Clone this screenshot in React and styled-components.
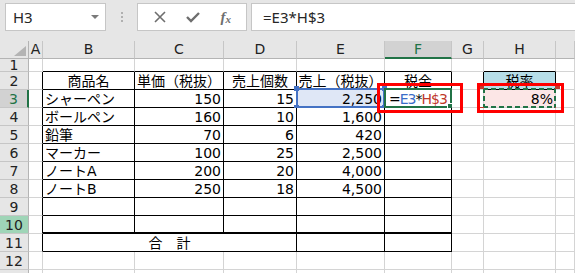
import styled, { createGlobalStyle } from "styled-components";

const GlobalStyle = createGlobalStyle`
  body {
    margin: 0;
    background: #fff;
    overflow: hidden;
  }
`;

const GREEN = "#217346";
const GRID = "1px solid #d4d4d4";
const BLACK = "1px solid #000";
const THICK = "2px solid #000";

const COLUMNS = ["A", "B", "C", "D", "E", "F", "G", "H", ""];

const products = [
  ["シャーペン", "150", "15", "2,250"],
  ["ボールペン", "160", "10", "1,600"],
  ["鉛筆", "70", "6", "420"],
  ["マーカー", "100", "25", "2,500"],
  ["ノートA", "200", "20", "4,000"],
  ["ノートB", "250", "18", "4,500"],
];

const headings = ["商品名", "単価（税抜）", "売上個数", "売上（税抜）", "税金"];

const App = () => {
  const rows = [];
  for (let r = 1; r <= 13; r++) {
    // row 13 is only a sliver at the bottom edge, its number is not visible
    rows.push(
      <RowHead key={"h" + r} $sel={r === 3} $hl={r === 10} $short={r === 1}>
        {r < 13 ? r : null}
      </RowHead>
    );
    for (let c = 0; c < 9; c++) {
      const inTable = r >= 2 && r <= 11;
      let right;
      let bottom;
      let bg;
      let align = "left";
      let content = null;

      if (inTable && c <= 5) right = BLACK;
      if (r >= 1 && r <= 11 && c >= 1 && c <= 5) bottom = r === 10 ? THICK : BLACK;
      if (r === 2 && (c === 6 || c === 7)) right = BLACK;
      if ((r === 1 || r === 2) && c === 7) bottom = BLACK;

      if (r === 11 && c === 1) {
        rows.push(
          <Cell key={r + "-" + c} $span={3} $r={BLACK} $b={BLACK} $align="center">
            合　計
          </Cell>
        );
        c = 3;
        continue;
      }

      if (r === 2 && c >= 1 && c <= 5) {
        align = "center";
        content = headings[c - 1];
      }
      if (r === 2 && c === 7) {
        align = "center";
        bg = "#b7dee8";
        content = "税率";
      }
      if (r >= 3 && r <= 8 && c >= 1 && c <= 4) {
        const p = products[r - 3];
        content = p[c - 1];
        align = c === 1 ? "left" : "right";
      }

      if (r === 3 && c === 4) {
        rows.push(
          <Cell key={r + "-" + c} $r={right} $b={bottom} $bg="#dfe7f6" $align="right">
            {content}
            <RefBox>
              <Handle $c="#4472c4" $x="left" $y="top" />
              <Handle $c="#4472c4" $x="right" $y="top" />
              <Handle $c="#4472c4" $x="left" $y="bottom" />
              <Handle $c="#4472c4" $x="right" $y="bottom" />
            </RefBox>
          </Cell>
        );
        continue;
      }
      if (r === 3 && c === 5) {
        rows.push(
          <Cell key={r + "-" + c} $r={right} $b={bottom} $align="left">
            <EditText>
              =<Ref $c="#3a6dc8">E3</Ref>*<Ref $c="#c0392b">H$3</Ref>
            </EditText>
            <Caret />
            <ActiveBox>
              <FillHandle />
            </ActiveBox>
          </Cell>
        );
        continue;
      }
      if (r === 3 && c === 7) {
        rows.push(
          <Cell key={r + "-" + c} $bg="#fce6e6" $align="right">
            8%
            <AntsBox>
              <Handle $c="#c0392b" $x="left" $y="top" />
              <Handle $c="#c0392b" $x="right" $y="top" />
              <Handle $c="#c0392b" $x="left" $y="bottom" />
              <Handle $c="#c0392b" $x="right" $y="bottom" />
            </AntsBox>
          </Cell>
        );
        continue;
      }

      rows.push(
        <Cell key={r + "-" + c} $r={right} $b={bottom} $bg={bg} $align={align}>
          {content}
        </Cell>
      );
    }
  }

  return (
    <>
      <GlobalStyle />
      <Window>
        <FormulaBar>
          <NameBox>
            H3
            <DropArrow />
          </NameBox>
          <Grip>
            <span />
            <span />
            <span />
          </Grip>
          <ButtonGroup>
            <IconButton>
              <svg width="12" height="12" viewBox="0 0 12 12">
                <path d="M1 1 L11 11 M11 1 L1 11" stroke="#6e6e6e" strokeWidth="1.6" />
              </svg>
            </IconButton>
            <IconButton>
              <svg width="14" height="12" viewBox="0 0 14 12">
                <path d="M1 6 L5 10 L13 2" stroke="#6e6e6e" strokeWidth="2.4" fill="none" />
              </svg>
            </IconButton>
            <IconButton>
              <Fx>
                f<sub>x</sub>
              </Fx>
            </IconButton>
          </ButtonGroup>
          <FormulaInput>=E3*H$3</FormulaInput>
        </FormulaBar>

        <Sheet>
          <Corner>
            <svg width="12" height="10" viewBox="0 0 12 10">
              <path d="M12 0 L12 10 L0 10 Z" fill="#b4b4b4" />
            </svg>
          </Corner>
          {COLUMNS.map((name, i) => (
            <ColHead key={i} $sel={name === "F"}>
              {name}
            </ColHead>
          ))}
          {rows}
          <Callout style={{ left: 377, top: 42, width: 86 }} />
          <Callout style={{ left: 477, top: 42, width: 87 }} />
        </Sheet>
      </Window>
    </>
  );
};

export default App;

const Window = styled.div`
  width: 575px;
  height: 273px;
  overflow: hidden;
  background: #fff;
`;

const FormulaBar = styled.div`
  box-sizing: border-box;
  height: 41px;
  display: flex;
  align-items: flex-start;
  padding: 3px 0 0 5px;
  background: #e6e6e6;
  font-family: "Noto Sans", "Open Sans", sans-serif;
`;

const NameBox = styled.div`
  position: relative;
  box-sizing: border-box;
  width: 101px;
  height: 28px;
  background: #fff;
  border: 1px solid #c6c6c6;
  padding-left: 7px;
  font-size: 15px;
  line-height: 26px;
  color: #262626;
`;

const DropArrow = styled.span`
  position: absolute;
  right: 6px;
  top: 11px;
  border-left: 4px solid transparent;
  border-right: 4px solid transparent;
  border-top: 4px solid #7a7a7a;
`;

const Grip = styled.div`
  width: 31px;
  height: 28px;
  display: flex;
  flex-direction: column;
  align-items: center;
  justify-content: center;
  gap: 2px;

  span {
    width: 2px;
    height: 2px;
    background: #b0b0b0;
  }
`;

const ButtonGroup = styled.div`
  box-sizing: border-box;
  width: 110px;
  height: 28px;
  margin-right: 4px;
  background: #fff;
  border: 1px solid #c6c6c6;
  display: flex;
  align-items: center;
  justify-content: space-around;
  padding: 0 4px 0 6px;
`;

const IconButton = styled.div`
  width: 24px;
  height: 20px;
  display: flex;
  align-items: center;
  justify-content: center;
`;

const Fx = styled.span`
  font-family: "Liberation Serif", serif;
  font-style: italic;
  font-weight: bold;
  font-size: 15px;
  color: #6e6e6e;

  sub {
    font-size: 11px;
    vertical-align: -1px;
  }
`;

const FormulaInput = styled.div`
  box-sizing: border-box;
  flex: 1;
  height: 28px;
  background: #fff;
  border: 1px solid #c6c6c6;
  border-right: none;
  padding-left: 11px;
  font-size: 15px;
  line-height: 26px;
  color: #262626;
`;

const Sheet = styled.div`
  position: relative;
  display: grid;
  grid-template-columns: 29px 14px 92px 89px 73px 88px 67px 32px 72px 1fr;
  grid-template-rows: 18px 13px repeat(12, 18px);
  font-family: "DejaVu Sans", "Noto Sans CJK JP", sans-serif;
  font-size: 14px;
  color: #000;
`;

const Corner = styled.div`
  box-sizing: border-box;
  background: #e6e6e6;
  border-right: 1px solid #b4b4b4;
  border-bottom: 1px solid #b4b4b4;
  display: flex;
  align-items: flex-end;
  justify-content: flex-end;
  padding: 0 2px 2px 0;
`;

const ColHead = styled.div`
  box-sizing: border-box;
  background: ${(p) => (p.$sel ? "#d2d2d2" : "#e6e6e6")};
  border-right: 1px solid #c6c6c6;
  border-bottom: ${(p) => (p.$sel ? `2px solid ${GREEN}` : "1px solid #b4b4b4")};
  color: ${(p) => (p.$sel ? GREEN : "#222")};
  display: flex;
  align-items: center;
  justify-content: center;
  line-height: 15px;
`;

const RowHead = styled.div`
  box-sizing: border-box;
  background: ${(p) => (p.$sel ? "#d2d2d2" : p.$hl ? "#9fd5b7" : "#e6e6e6")};
  border-right: ${(p) => (p.$sel ? `2px solid ${GREEN}` : "1px solid #b4b4b4")};
  border-bottom: 1px solid #c6c6c6;
  color: ${(p) => (p.$sel ? GREEN : "#222")};
  display: flex;
  align-items: ${(p) => (p.$short ? "center" : "flex-end")};
  justify-content: center;
  line-height: ${(p) => (p.$short ? "12px" : "15px")};
`;

const Cell = styled.div`
  position: relative;
  box-sizing: border-box;
  grid-column: ${(p) => (p.$span ? `span ${p.$span}` : "auto")};
  display: flex;
  align-items: flex-end;
  justify-content: ${(p) =>
    p.$align === "right" ? "flex-end" : p.$align === "center" ? "center" : "flex-start"};
  padding: 0 2px;
  background: ${(p) => p.$bg || "#fff"};
  border-right: ${(p) => p.$r || GRID};
  border-bottom: ${(p) => p.$b || GRID};
  line-height: 15px;
  white-space: nowrap;
`;

const RefBox = styled.div`
  position: absolute;
  top: -2px;
  left: -1px;
  right: -1px;
  bottom: -1px;
  border: 2px solid #4472c4;
`;

const ActiveBox = styled.div`
  position: absolute;
  top: -2px;
  left: -1px;
  right: -1px;
  bottom: -1px;
  border: 2px solid ${GREEN};
`;

const FillHandle = styled.span`
  position: absolute;
  right: -4px;
  bottom: -4px;
  width: 5px;
  height: 5px;
  background: ${GREEN};
  border: 1px solid #fff;
`;

const Handle = styled.span`
  position: absolute;
  ${(p) => p.$x}: -4px;
  ${(p) => p.$y}: -4px;
  width: 5px;
  height: 5px;
  background: ${(p) => p.$c};
`;

const AntsBox = styled.div`
  position: absolute;
  top: -2px;
  left: -1px;
  right: -1px;
  bottom: -1px;
  background:
    repeating-linear-gradient(90deg, ${GREEN} 0 5px, transparent 5px 8px) top / 100% 2px no-repeat,
    repeating-linear-gradient(90deg, ${GREEN} 0 5px, transparent 5px 8px) bottom / 100% 2px no-repeat,
    repeating-linear-gradient(180deg, ${GREEN} 0 5px, transparent 5px 8px) left / 2px 100% no-repeat,
    repeating-linear-gradient(180deg, ${GREEN} 0 5px, transparent 5px 8px) right / 2px 100% no-repeat;
`;

const EditText = styled.span`
  padding-left: 2px;
  letter-spacing: -1px;
`;

const Ref = styled.span`
  color: ${(p) => p.$c};
`;

const Caret = styled.span`
  width: 1px;
  height: 16px;
  margin-left: 3px;
  background: #000;
`;

const Callout = styled.div`
  position: absolute;
  box-sizing: border-box;
  height: 30px;
  border: 3px solid #ff0000;
  z-index: 5;
  pointer-events: none;
`;
